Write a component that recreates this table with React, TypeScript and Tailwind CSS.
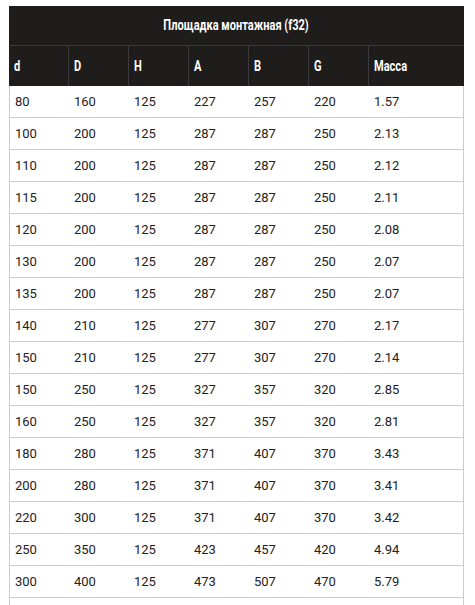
import React from "react";

const rows: string[][] = [
  ["80", "160", "125", "227", "257", "220", "1.57"],
  ["100", "200", "125", "287", "287", "250", "2.13"],
  ["110", "200", "125", "287", "287", "250", "2.12"],
  ["115", "200", "125", "287", "287", "250", "2.11"],
  ["120", "200", "125", "287", "287", "250", "2.08"],
  ["130", "200", "125", "287", "287", "250", "2.07"],
  ["135", "200", "125", "287", "287", "250", "2.07"],
  ["140", "210", "125", "277", "307", "270", "2.17"],
  ["150", "210", "125", "277", "307", "270", "2.14"],
  ["150", "250", "125", "327", "357", "320", "2.85"],
  ["160", "250", "125", "327", "357", "320", "2.81"],
  ["180", "280", "125", "371", "407", "370", "3.43"],
  ["200", "280", "125", "371", "407", "370", "3.41"],
  ["220", "300", "125", "371", "407", "370", "3.42"],
  ["250", "350", "125", "423", "457", "420", "4.94"],
  ["300", "400", "125", "473", "507", "470", "5.79"],
  ["", "", "", "", "", "", ""],
];

const heads = ["d", "D", "H", "A", "B", "G", "Масса"];
const widths = ["w-[60px]", "w-[60px]", "w-[60px]", "w-[60px]", "w-[60px]", "w-[60px]", "w-[95px]"];

export default function App() {
  return (
    <div
      className="w-[475px] h-[605px] overflow-hidden bg-white pt-[6px] pl-[9px]"
      style={{ fontFamily: "Roboto, 'Noto Sans', sans-serif" }}
    >
      <div className="w-[455px]">
        <div className="h-[40px] bg-[#1f1c1c] flex items-center justify-center border-b border-[#3c3a3a]">
          <span className="inline-block font-bold text-[14px] text-white scale-x-[0.79] whitespace-nowrap">
            Площадка монтажная (f32)
          </span>
        </div>
        <div className="flex h-[40px] bg-[#1f1c1c]">
          {heads.map((h, i) => (
            <div
              key={i}
              className={`${widths[i]} h-full flex items-center pl-[5px] ${i < 6 ? "border-r border-[#3c3a3a]" : ""}`}
            >
              <span className="inline-block origin-left scale-x-[0.79] font-bold text-[14px] text-white">{h}</span>
            </div>
          ))}
        </div>
        <div className="border-l border-r border-[#cccccc]">
          {rows.map((r, ri) => (
            <div key={ri} className="flex h-[32px] border-b border-[#cccccc] -mx-px">
              {r.map((c, ci) => (
                <div
                  key={ci}
                  className={`${widths[ci]} flex items-center text-[13px] text-[#222222] ${ci === 0 ? "pl-[6px]" : "pl-[5px]"}`}
                >
                  {c}
                </div>
              ))}
            </div>
          ))}
        </div>
      </div>
    </div>
  );
}
